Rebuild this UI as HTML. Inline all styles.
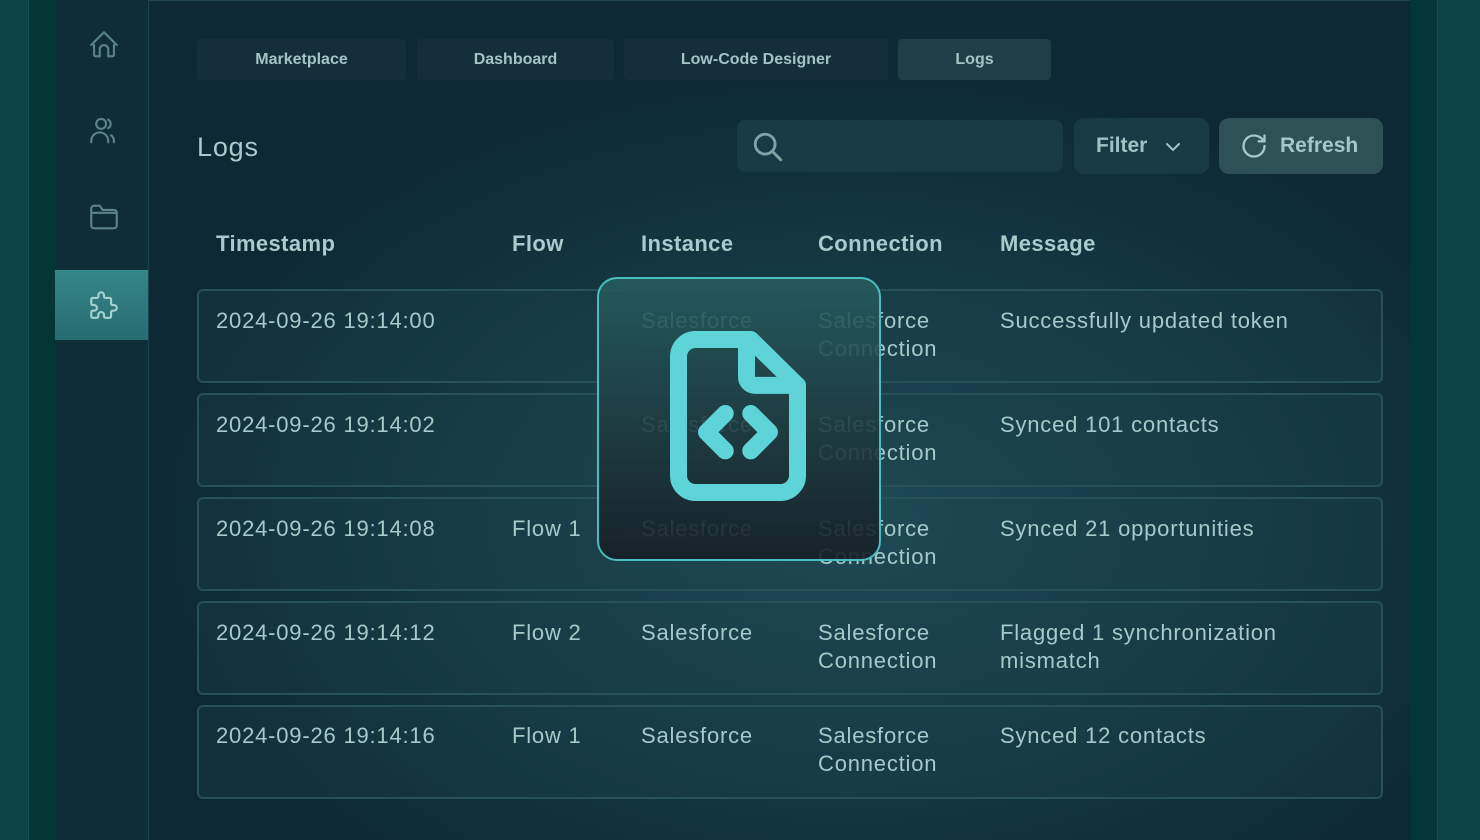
<!DOCTYPE html>
<html><head><meta charset="utf-8"><style>
*{margin:0;padding:0;box-sizing:border-box}
body{width:1480px;height:840px;overflow:hidden;font-family:"Liberation Sans",sans-serif;background:#0a4446;position:relative;color:#a6c9c9}
.abs{position:absolute}
#lstrip{left:28px;top:0;width:27px;height:840px;background:#053636;border-left:1px solid #12504f}
#rstrip{left:1410px;top:0;width:28px;height:840px;background:#053636;border-right:1px solid #12504f}
#side{left:55px;top:0;width:94px;height:840px;background:#0f2d37;border-right:1px solid #1f4650}
#main{left:149px;top:0;width:1261px;height:840px;background:radial-gradient(ellipse 700px 450px at 700px 520px,#1f4a56 0%,#153a46 50%,#0d2a34 100%);border-top:1px solid #1f4650}
.tab{top:39px;height:41px;background:#142f3a;border-radius:4px;font-size:16px;font-weight:bold;text-align:center;line-height:41px;color:#a3c4c4}
.row{left:197px;width:1186px;height:94px;border:2px solid #26505a;border-radius:6px;background:rgba(30,70,80,0.25)}
.c{position:absolute;font-size:22px;line-height:28px;color:#a6c9c9;letter-spacing:0.8px}
.h{position:absolute;top:231px;font-size:22px;font-weight:bold;color:#a9cbcb;letter-spacing:0.4px}
</style></head><body>
<div id="lstrip" class="abs"></div>
<div id="rstrip" class="abs"></div>
<div id="side" class="abs">
 <svg class="abs" style="left:32px;top:28px" width="34" height="34" viewBox="0 0 24 24" fill="none" stroke="#5c8488" stroke-width="1.5" stroke-linecap="round" stroke-linejoin="round"><path d="M5 12V19a1 1 0 0 0 1 1h3v-5a3 3 0 0 1 6 0v5h3a1 1 0 0 0 1-1v-7M3 12l9-9 9 9"/></svg>
 <svg class="abs" style="left:32px;top:114px" width="34" height="34" viewBox="0 0 24 24" fill="none" stroke="#5c8488" stroke-width="1.5" stroke-linecap="round"><circle cx="10" cy="7" r="3.5"/><path d="M3 20v-1a6 6 0 0 1 12 0v1M15 4a3.5 3.5 0 0 1 0 6M19 20v-1a5 5 0 0 0-2-4"/></svg>
 <svg class="abs" style="left:32px;top:200px" width="34" height="34" viewBox="0 0 24 24" fill="none" stroke="#5c8488" stroke-width="1.5" stroke-linejoin="round"><path d="M3 6a2 2 0 0 1 2-2h4l2 3h8a2 2 0 0 1 2 2v9a2 2 0 0 1-2 2H5a2 2 0 0 1-2-2z M3 9h18"/></svg>
 <div class="abs" style="left:0;top:270px;width:93px;height:70px;background:linear-gradient(#358689,#276b73)"></div>
 <svg class="abs" style="left:32px;top:288px" width="34" height="34" viewBox="0 0 24 24" fill="none" stroke="#a6d2d2" stroke-width="1.5" stroke-linejoin="round"><path d="M4 7h3a1 1 0 0 0 1-1V5a2 2 0 0 1 4 0v1a1 1 0 0 0 1 1h3a1 1 0 0 1 1 1v3a1 1 0 0 0 1 1h1a2 2 0 0 1 0 4h-1a1 1 0 0 0-1 1v3a1 1 0 0 1-1 1h-3a1 1 0 0 1-1-1v-1a2 2 0 0 0-4 0v1a1 1 0 0 1-1 1H4a1 1 0 0 1-1-1v-3a1 1 0 0 1 1-1h1a2 2 0 0 0 0-4H4a1 1 0 0 1-1-1V8a1 1 0 0 1 1-1"/></svg>
</div>
<div id="main" class="abs"></div>
<div class="abs tab" style="left:197px;width:209px">Marketplace</div>
<div class="abs tab" style="left:417px;width:197px">Dashboard</div>
<div class="abs tab" style="left:624px;width:264px">Low-Code Designer</div>
<div class="abs tab" style="left:898px;width:153px;background:#1f3f47">Logs</div>
<div class="abs" style="left:197px;top:130px;font-size:27px;line-height:34px;color:#a9cbcb;letter-spacing:0.8px">Logs</div>
<div class="abs" style="left:737px;top:120px;width:326px;height:52px;background:#173a45;border-radius:8px"></div>
<svg class="abs" style="left:751px;top:130px" width="34" height="34" viewBox="0 0 24 24" fill="none" stroke="#7ea5a6" stroke-width="2" stroke-linecap="round"><circle cx="10" cy="10" r="7"/><path d="M21 21l-6-6"/></svg>
<div class="abs" style="left:1074px;top:118px;width:135px;height:56px;background:#173a43;border-radius:10px;font-size:21px;font-weight:bold;line-height:56px;padding-left:22px;color:#9fc4c4">Filter</div>
<svg class="abs" style="left:1161px;top:135px" width="24" height="24" viewBox="0 0 24 24" fill="none" stroke="#9fc4c4" stroke-width="2" stroke-linecap="round"><path d="M6 9l6 6 6-6"/></svg>
<div class="abs" style="left:1219px;top:118px;width:164px;height:56px;background:#2e5156;border-radius:10px;font-size:21px;font-weight:bold;line-height:56px;padding-left:61px;color:#a3c8c8">Refresh</div>
<svg class="abs" style="left:1240px;top:132px" width="28" height="28" viewBox="0 0 24 24" fill="none" stroke="#a3c8c8" stroke-width="2" stroke-linecap="round" stroke-linejoin="round"><path d="M21 12a9 9 0 1 1-9-9c2.52 0 4.93 1 6.74 2.74L21 8"/><path d="M21 3v5h-5"/></svg>
<div class="h" style="left:216px">Timestamp</div>
<div class="h" style="left:512px">Flow</div>
<div class="h" style="left:641px">Instance</div>
<div class="h" style="left:818px">Connection</div>
<div class="h" style="left:1000px">Message</div>

<div class="abs row" style="top:289px"></div>
<div class="abs row" style="top:393px"></div>
<div class="abs row" style="top:497px"></div>
<div class="abs row" style="top:601px"></div>
<div class="abs row" style="top:705px"></div>

<div class="c" style="left:216px;top:307px">2024-09-26 19:14:00</div>
<div class="c" style="left:641px;top:307px">Salesforce</div>
<div class="c" style="left:818px;top:307px">Salesforce<br>Connection</div>
<div class="c" style="left:1000px;top:307px">Successfully updated token</div>

<div class="c" style="left:216px;top:411px">2024-09-26 19:14:02</div>
<div class="c" style="left:641px;top:411px">Salesforce</div>
<div class="c" style="left:818px;top:411px">Salesforce<br>Connection</div>
<div class="c" style="left:1000px;top:411px">Synced 101 contacts</div>

<div class="c" style="left:216px;top:515px">2024-09-26 19:14:08</div>
<div class="c" style="left:512px;top:515px">Flow 1</div>
<div class="c" style="left:641px;top:515px">Salesforce</div>
<div class="c" style="left:818px;top:515px">Salesforce<br>Connection</div>
<div class="c" style="left:1000px;top:515px">Synced 21 opportunities</div>

<div class="c" style="left:216px;top:619px">2024-09-26 19:14:12</div>
<div class="c" style="left:512px;top:619px">Flow 2</div>
<div class="c" style="left:641px;top:619px">Salesforce</div>
<div class="c" style="left:818px;top:619px">Salesforce<br>Connection</div>
<div class="c" style="left:1000px;top:619px">Flagged 1 synchronization<br>mismatch</div>

<div class="c" style="left:216px;top:722px">2024-09-26 19:14:16</div>
<div class="c" style="left:512px;top:722px">Flow 1</div>
<div class="c" style="left:641px;top:722px">Salesforce</div>
<div class="c" style="left:818px;top:722px">Salesforce<br>Connection</div>
<div class="c" style="left:1000px;top:722px">Synced 12 contacts</div>

<div class="abs" style="left:597px;top:277px;width:284px;height:284px;border:2.5px solid #4bbcc0;border-radius:20px;background:linear-gradient(rgba(38,92,94,0.88),rgba(22,30,38,0.9))"></div>
<svg class="abs" style="left:636px;top:314px" width="204" height="204" viewBox="0 0 24 24" fill="none" stroke="#5fd4d8" stroke-width="2" stroke-linecap="round" stroke-linejoin="round"><path d="M13 3v4.4a1 1 0 0 0 1 1h5"/><path d="M17 21H7a2 2 0 0 1-2-2V5a2 2 0 0 1 2-2h6.5l5.5 5.4V19a2 2 0 0 1-2 2z"/><path d="M10.5 11.7L8.3 13.9l2.2 2.2M13.5 11.7l2.2 2.2-2.2 2.2"/></svg>
</body></html>
